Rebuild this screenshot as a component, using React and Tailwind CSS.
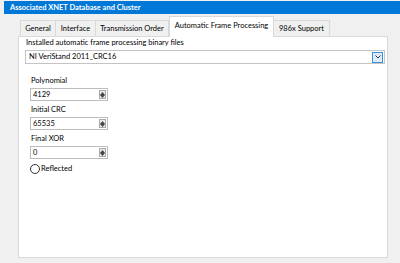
import React from "react";

const font = { fontFamily: 'Lato, "Noto Sans", sans-serif' };

function Spinner() {
  return (
    <div className="flex flex-col items-center justify-center w-[7px] h-[9px] border border-[#a8a8a8] bg-[#ececec] mr-[1px]">
      <svg width="5" height="3" viewBox="0 0 5 3"><path d="M0 3 L2.5 0 L5 3 Z" fill="#444" /></svg>
      <svg width="5" height="3" viewBox="0 0 5 3"><path d="M0 0 L2.5 3 L5 0 Z" fill="#444" /></svg>
    </div>
  );
}

function NumField({ label, value }) {
  return (
    <div className="flex flex-col">
      <span className="text-[7.5px] leading-[10px] text-black ml-[1px]">{label}</span>
      <div className="mt-[2px] flex items-center justify-between w-[78px] h-[13px] border border-[#bcbcbc] bg-white pl-[2px]">
        <span className="text-[7.5px] leading-[10px] text-black">{value}</span>
        <Spinner />
      </div>
    </div>
  );
}

function Tab({ label, active, w }) {
  if (active)
    return (
      <div className={`${w} h-[21px] -mb-[1px] pt-[3px] text-center bg-white border border-b-0 border-[#d9d9d9] text-[7.5px] leading-[12px] text-black relative z-10`}>
        {label}
      </div>
    );
  return (
    <div className={`${w} h-[16px] mt-[4px] pt-[2px] text-center bg-[#f0f0f0] border border-b-0 border-l-0 first:border-l border-[#d9d9d9] text-[7.5px] leading-[12px] text-black`}>
      {label}
    </div>
  );
}

export default function App() {
  return (
    <div className="w-[400px] h-[263px] bg-[#f0f0f0] overflow-hidden" style={font}>
      <div className="ml-[4px] mt-[1px] h-[13px] bg-[#0078d7] pl-[6px] flex items-center">
        <span className="text-white font-bold text-[7.5px] leading-[10px]">Associated XNET Database and Cluster</span>
      </div>

      <div className="ml-[20px] mt-[2px] flex items-end">
        <Tab label="General" w="w-[36px]" />
        <Tab label="Interface" w="w-[40px]" />
        <Tab label="Transmission Order" w="w-[73px]" />
        <Tab label="Automatic Frame Processing" w="w-[105px]" active />
        <Tab label="986x Support" w="w-[56px]" />
      </div>

      <div className="ml-[18px] w-[370px] h-[222px] bg-white border border-[#d9d9d9] pt-[1px] pl-[6px]">
        <div className="text-[7.5px] leading-[10px] text-black ml-[1px]">Installed automatic frame processing binary files</div>
        <div className="mt-[2px] w-[360px] h-[14px] border border-[#c4c4c4] bg-white flex items-center justify-between pl-[3px] pr-[1px]">
          <span className="text-[7.5px] leading-[10px] text-black">NI VeriStand 2011_CRC16</span>
          <div className="w-[11px] h-[11px] border border-[#3c8fd7] bg-[#dcecfc] flex items-center justify-center">
            <svg width="6" height="4" viewBox="0 0 6 4"><path d="M0.5 0.5 L3 3 L5.5 0.5" stroke="#333" strokeWidth="1" fill="none" /></svg>
          </div>
        </div>

        <div className="mt-[12px] ml-[5px] flex flex-col gap-[4px]">
          <NumField label="Polynomial" value="4129" />
          <NumField label="Initial CRC" value="65535" />
          <NumField label="Final XOR" value="0" />
          <div className="mt-[1px] flex items-center gap-[1px]">
            <div className="w-[10px] h-[10px] rounded-full border border-[#333] bg-white" />
            <span className="text-[7.5px] leading-[10px] text-black">Reflected</span>
          </div>
        </div>
      </div>
    </div>
  );
}
